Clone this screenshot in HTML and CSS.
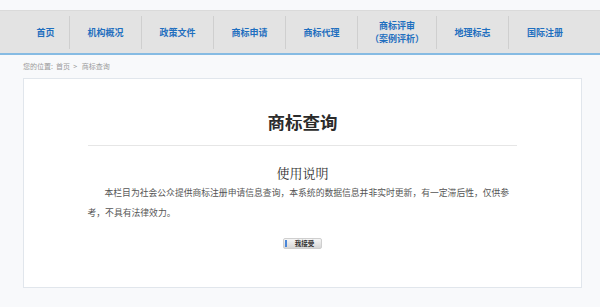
FILE: index.html
```html
<!DOCTYPE html>
<html lang="zh-CN">
<head>
<meta charset="utf-8">
<title>商标查询</title>
<link rel="stylesheet" href="styles.css">
</head>
<body>
<div class="topstrip"></div>
<nav class="nav">
  <a class="nav-item w48">首页</a>
  <a class="nav-item">机构概况</a>
  <a class="nav-item">政策文件</a>
  <a class="nav-item">商标申请</a>
  <a class="nav-item">商标代理</a>
  <a class="nav-item w79 two">商标评审<br>（案例评析）</a>
  <a class="nav-item">地理标志</a>
  <a class="nav-item last">国际注册</a>
</nav>
<div class="crumb">您的位置:&nbsp; 首页 &nbsp;&gt;&nbsp;&nbsp; 商标查询</div>
<main class="box">
  <h1 class="title">商标查询</h1>
  <div class="rule"></div>
  <h2 class="subtitle">使用说明</h2>
  <p class="desc">本栏目为社会公众提供商标注册申请信息查询，本系统的数据信息并非实时更新，有一定滞后性，仅供参考，不具有法律效力。</p>
  <div class="btn-row"><button class="btn"><span class="btn-edge"></span>我接受</button></div>
</main>
</body>
</html>
```
FILE: styles.css
```css
html, body {
  margin: 0;
  padding: 0;
}
body {
  width: 600px;
  height: 307px;
  overflow: hidden;
  background: #f8f9fb;
  font-family: "Noto Sans CJK SC", "Noto Sans", sans-serif;
}
.topstrip {
  height: 10px;
  background: #f8f9fb;
}
.nav {
  display: flex;
  align-items: center;
  height: 42px;
  padding-left: 22px;
  background: #e3e3e3;
  border-top: 1px solid #dadada;
  border-bottom: 2px solid #86bbe3;
}
.nav-item {
  width: 71px;
  height: 33px;
  border-right: 1px solid #cfcfcf;
  display: flex;
  align-items: center;
  justify-content: center;
  text-align: center;
  color: #1f6fbf;
  font-size: 9px;
  font-weight: bold;
  line-height: 13px;
}
.nav-item.w48 { width: 47px; }
.nav-item.w79 { width: 78px; }
.nav-item.last { border-right: none; width: 72px; }
.crumb {
  height: 23px;
  line-height: 23px;
  padding-left: 23px;
  font-size: 7px;
  color: #9a9a9a;
}
.box {
  margin-left: 23px;
  width: 557px;
  height: 208px;
  background: #fff;
  border: 1px solid #e1e6ec;
  display: flex;
  flex-direction: column;
  align-items: center;
}
.title {
  margin: 33px 0 0;
  font-size: 17.5px;
  line-height: 20px;
  font-weight: bold;
  color: #2b2b2b;
}
.rule {
  width: 429px;
  height: 1px;
  background: #e6e6e6;
  margin-top: 13px;
}
.subtitle {
  margin: 19px 0 0;
  font-family: "Noto Serif CJK SC", "AR PL UMing CN", "Liberation Serif", serif;
  font-size: 13px;
  line-height: 16px;
  font-weight: normal;
  color: #333;
}
.desc {
  width: 430px;
  margin: 2px 0 0;
  font-size: 8.8px;
  line-height: 20px;
  text-indent: 17px;
  color: #555;
}
.btn-row {
  margin-top: 15px;
  display: flex;
  justify-content: center;
}
.btn {
  position: relative;
  width: 39px;
  height: 11px;
  padding: 0 0 0 4px;
  border: 1px solid #cfcfcf;
  border-radius: 2px;
  background: linear-gradient(#f6f6f6, #d6d6d6);
  font-family: "Noto Sans CJK SC", sans-serif;
  font-size: 6.5px;
  line-height: 9px;
  color: #333;
  font-weight: bold;
}
.btn-edge {
  position: absolute;
  left: 1px;
  top: 1px;
  bottom: 1px;
  width: 2px;
  background: #4a86d8;
}
```
